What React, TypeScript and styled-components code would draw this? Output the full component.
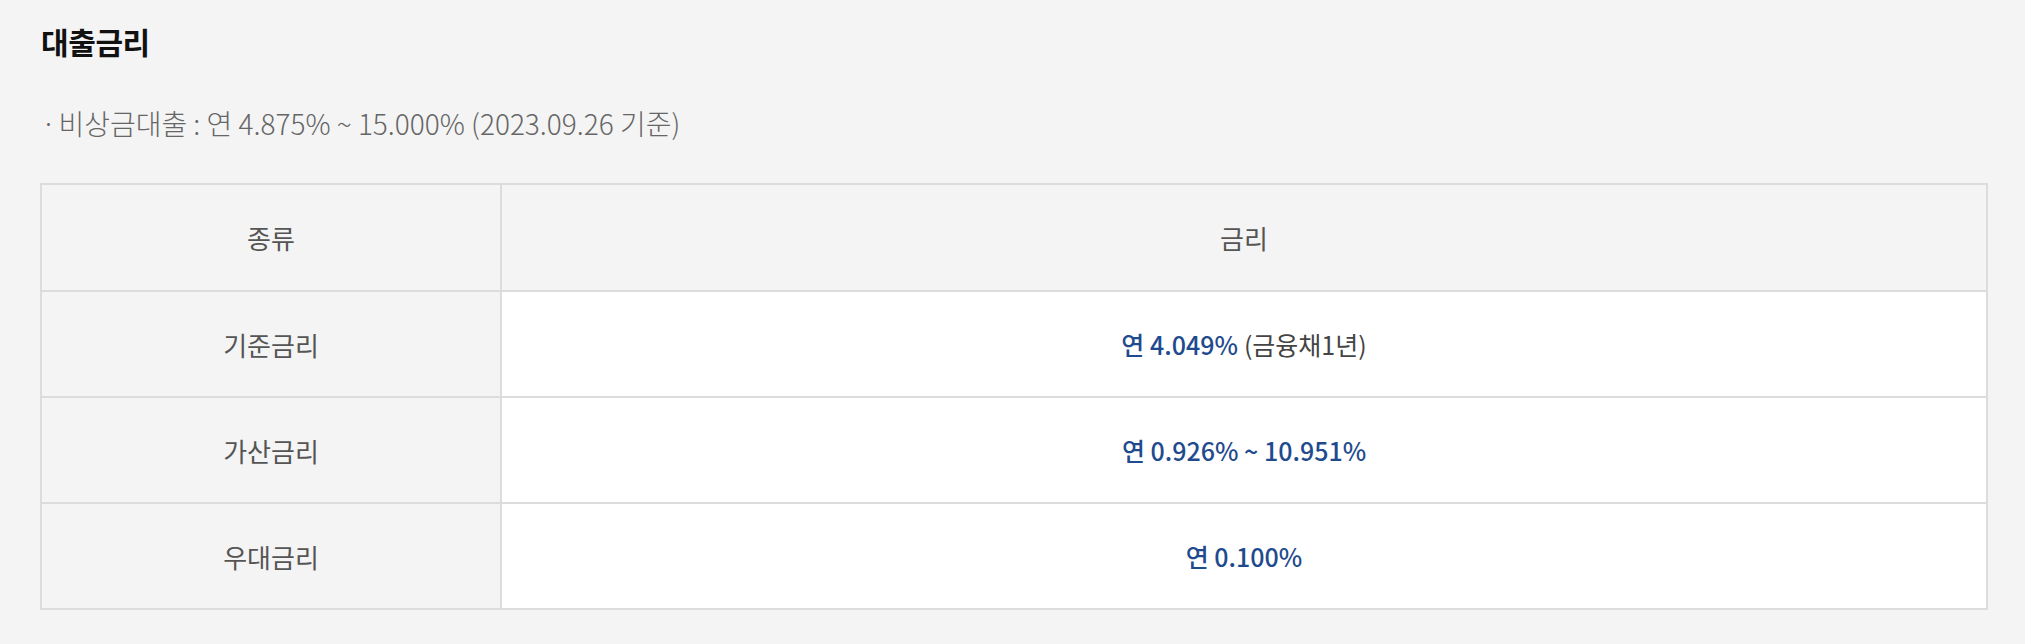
import React from "react";
import styled, { createGlobalStyle } from "styled-components";

const GlobalStyle = createGlobalStyle`
  html, body {
    margin: 0;
    padding: 0;
    background: #f4f4f4;
  }
  body {
    font-family: "Noto Sans CJK KR", "Noto Sans", sans-serif;
  }
`;

const Page = styled.section`
  width: 2025px;
  height: 644px;
  box-sizing: border-box;
  padding: 21px 37px 0 40px;
  background: #f4f4f4;
`;

const Title = styled.h2`
  margin: 0 0 0 1px;
  font-size: 30px;
  line-height: 40px;
  font-weight: 700;
  color: #111;
  letter-spacing: -0.4px;
`;

const Note = styled.p`
  margin: 45px 0 0 1px;
  font-size: 28px;
  line-height: 34px;
  font-weight: 300;
  color: #666;
  letter-spacing: 0;
`;

const Dot = styled.span`
  margin-right: -4px;
`;

const Table = styled.table`
  margin-top: 43px;
  width: 1948px;
  border-collapse: collapse;
  table-layout: fixed;
  border: 2px solid #dcdcdc;
`;

const HeadCell = styled.th`
  height: 105px;
  padding: 0;
  background: #f4f4f4;
  border: 2px solid #dcdcdc;
  font-size: 26px;
  font-weight: 400;
  color: #555;
  text-align: center;
  vertical-align: middle;
`;

const LabelCell = styled.td`
  height: 104px;
  padding: 0;
  background: #f4f4f4;
  border: 2px solid #dcdcdc;
  font-size: 26px;
  color: #555;
  text-align: center;
  vertical-align: middle;
`;

const ValueCell = styled.td`
  height: 104px;
  padding: 0;
  background: #ffffff;
  border: 2px solid #dcdcdc;
  font-size: 25px;
  text-align: center;
  vertical-align: middle;
`;

const Rate = styled.span`
  color: #1f4b8e;
  font-weight: 500;
`;

const Basis = styled.span`
  color: #444;
  font-weight: 400;
  margin-left: 6px;
`;

const rows: { label: string; rate: string; basis?: string }[] = [
  { label: "기준금리", rate: "연 4.049%", basis: "(금융채1년)" },
  { label: "가산금리", rate: "연 0.926% ~ 10.951%" },
  { label: "우대금리", rate: "연 0.100%" },
];

export default function App() {
  return (
    <>
      <GlobalStyle />
      <Page>
        <Title>대출금리</Title>
        <Note>
          <Dot>·</Dot> 비상금대출 : 연 4.875% ~ 15.000% (2023.09.26 기준)
        </Note>
        <Table>
          <colgroup>
            <col style={{ width: 460 }} />
            <col />
          </colgroup>
          <thead>
            <tr>
              <HeadCell>종류</HeadCell>
              <HeadCell>금리</HeadCell>
            </tr>
          </thead>
          <tbody>
            {rows.map((r) => (
              <tr key={r.label}>
                <LabelCell>{r.label}</LabelCell>
                <ValueCell>
                  <Rate>{r.rate}</Rate>
                  {r.basis && <Basis>{r.basis}</Basis>}
                </ValueCell>
              </tr>
            ))}
          </tbody>
        </Table>
      </Page>
    </>
  );
}
